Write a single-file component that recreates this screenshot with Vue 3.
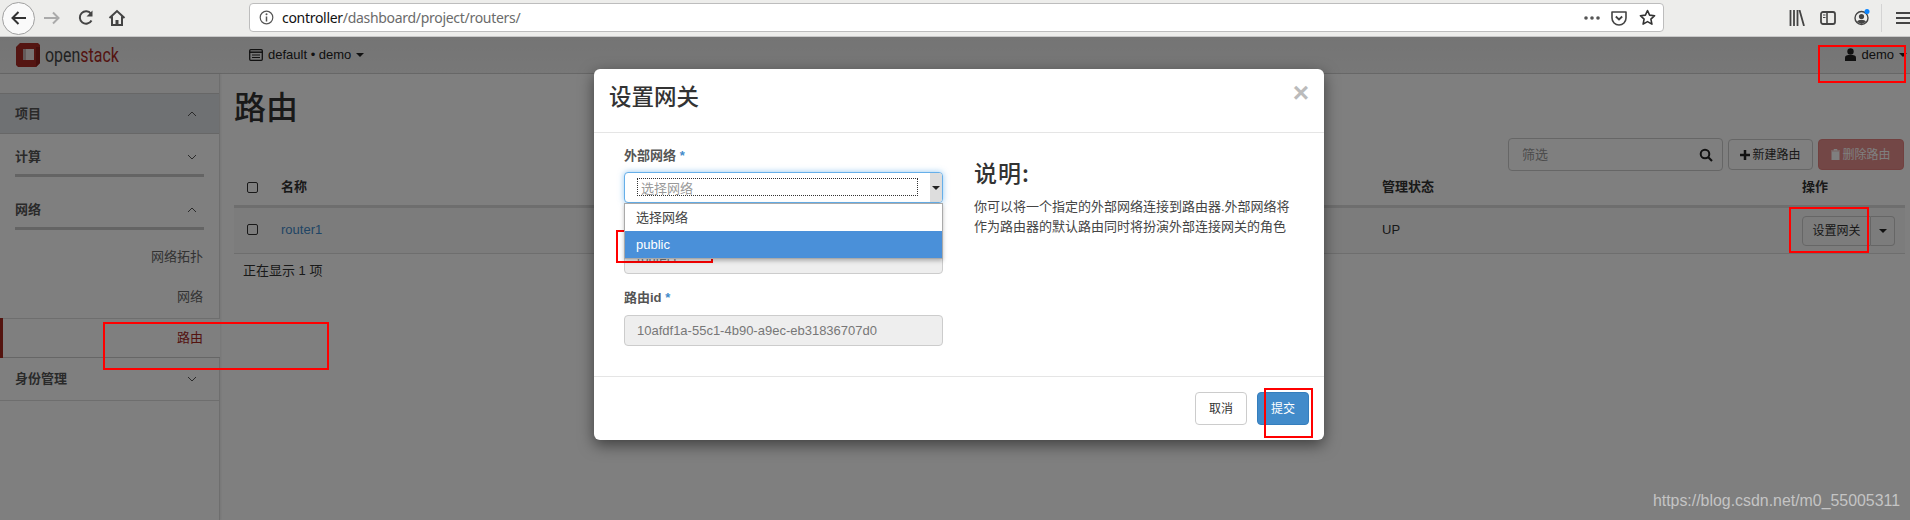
<template>
  <div class="page">
    <div class="browser">
      <div class="nav-btns">
        <span class="back">
          <svg width="20" height="20" viewBox="0 0 20 20"><path d="M17 10H4M9.500 4L3.500 10l6 6" fill="none" stroke="#333" stroke-width="2"/></svg>
        </span>
        <svg class="fwd" width="18" height="18" viewBox="0 0 18 18"><path d="M1 9h14M10 3.500L15.500 9 10 14.500" fill="none" stroke="#aaa" stroke-width="2"/></svg>
        <svg class="reload" width="18" height="18" viewBox="0 0 18 18"><path d="M14.500 11.500A6.200 6.200 0 1 1 14 4.800" fill="none" stroke="#444" stroke-width="2"/><path d="M15.500 1.500v6h-6z" fill="#444"/></svg>
        <svg class="home" width="18" height="18" viewBox="0 0 18 18"><path d="M1.500 9L9 2l7.500 7M4 7.500V16h10V7.500" fill="none" stroke="#444" stroke-width="2"/><path d="M7.500 16v-5h3v5z" fill="#444"/></svg>
      </div>
      <div class="url">
        <svg class="info" width="15" height="15" viewBox="0 0 15 15"><circle cx="7.500" cy="7.500" r="6.300" fill="none" stroke="#555" stroke-width="1.200"/><path d="M7.500 6.500v5" stroke="#555" stroke-width="1.500"/><circle cx="7.500" cy="4.300" r="1" fill="#555"/></svg>
        <span class="host">controller</span><span class="path">/dashboard/project/routers/</span>
        <span class="spacer"></span>
        <svg class="dots" width="16" height="4" viewBox="0 0 16 4"><circle cx="2" cy="2" r="1.800" fill="#555"/><circle cx="8" cy="2" r="1.800" fill="#555"/><circle cx="14" cy="2" r="1.800" fill="#555"/></svg>
        <svg class="pocket" width="16" height="16" viewBox="0 0 16 16"><path d="M1 2h14v6a7 7 0 0 1-14 0z" fill="none" stroke="#444" stroke-width="1.600" stroke-linejoin="round"/><path d="M4.800 6.500L8 9.500l3.200-3" fill="none" stroke="#444" stroke-width="1.800"/></svg>
        <svg class="star" width="17" height="17" viewBox="0 0 17 17"><path d="M8.500 1.500l2.100 4.600 5 .6-3.700 3.400 1 5-4.400-2.500-4.400 2.500 1-5L1.400 6.700l5-.6z" fill="none" stroke="#333" stroke-width="1.600" stroke-linejoin="round"/></svg>
      </div>
      <div class="tools">
        <svg width="16" height="16" viewBox="0 0 16 16"><path d="M1.500 0v16M5 0v16M8.500 0v16M10.500 0l4.500 16" stroke="#444" stroke-width="1.800" fill="none"/></svg>
        <svg width="16" height="14" viewBox="0 0 16 14"><rect x="1" y="1" width="14" height="12" rx="2" fill="none" stroke="#444" stroke-width="1.800"/><path d="M7 1.500v11" stroke="#444" stroke-width="1.600"/><path d="M3 4h2.500M3 6.500h2.500" stroke="#444" stroke-width="1.200"/></svg>
        <svg class="acct" width="16" height="18" viewBox="0 0 16 18"><circle cx="7.500" cy="10" r="6.500" fill="none" stroke="#444" stroke-width="1.400"/><circle cx="7.500" cy="8.500" r="2.600" fill="#444"/><path d="M3 14c1-3 8-3 9 0l-4.500 2z" fill="#444"/><circle cx="13" cy="3.500" r="2.500" fill="#0a84ff"/></svg>
        <span class="sep"></span>
        <svg width="14" height="14" viewBox="0 0 14 14"><path d="M0 2h14M0 7h14M0 12h14" stroke="#444" stroke-width="2"/></svg>
      </div>
    </div>

    <div class="navbar">
      <div class="brand">
        <svg width="24" height="24" viewBox="0 0 24 24"><path d="M4 0h18l2 2v18l-2 2-2 2H2l-2-2V4z" fill="#a82a24"/><path d="M20 4h4v16l-4 4z" fill="#8a1f1a"/><rect x="7" y="6" width="11" height="11" fill="#f0e8e8"/><path d="M7 6h3v11H7z" fill="#c9b5b5"/></svg>
        <span class="brand-text"><span>open</span><b>stack</b></span>
      </div>
      <div class="project">
        <svg width="14" height="12" viewBox="0 0 14 12"><rect x="0.700" y="0.700" width="12.600" height="10.600" rx="1" fill="none" stroke="#222" stroke-width="1.300"/><path d="M0 3.200h14" stroke="#222" stroke-width="1.500"/><path d="M3 6h8M3 8.500h8" stroke="#222" stroke-width="1.200"/></svg>
        <span>default • demo</span><i class="caret"></i>
      </div>
      <div class="user">
        <svg width="11" height="13" viewBox="0 0 11 13"><circle cx="5.500" cy="3.500" r="3.200" fill="#222"/><path d="M0 13V9.500C0 7.500 2 7 5.500 7S11 7.500 11 9.500V13z" fill="#222"/></svg>
        <span>demo</span><i class="caret"></i>
      </div>
    </div>

    <div class="content">
      <aside class="side">
        <div class="strip"></div>
        <div class="dash"><span>项目</span><svg class="chev" width="10" height="6" viewBox="0 0 10 6"><path d="M1 5l4-4 4 4" fill="none" stroke="#555" stroke-width="1"/></svg></div>
        <div class="panel"><span>计算</span><svg class="chev" width="10" height="6" viewBox="0 0 10 6"><path d="M1 1l4 4 4-4" fill="none" stroke="#555" stroke-width="1"/></svg></div>
        <div class="panel second"><span>网络</span><svg class="chev" width="10" height="6" viewBox="0 0 10 6"><path d="M1 5l4-4 4 4" fill="none" stroke="#555" stroke-width="1"/></svg></div>
        <div class="items">
          <div class="item">网络拓扑</div>
          <div class="item">网络</div>
          <div class="item active">路由</div>
        </div>
        <div class="identity"><span>身份管理</span><svg class="chev" width="10" height="6" viewBox="0 0 10 6"><path d="M1 1l4 4 4-4" fill="none" stroke="#555" stroke-width="1"/></svg></div>
      </aside>
      <main class="main">
        <h1>路由</h1>
        <div class="toolbar">
          <div class="filter"><span>筛选</span>
            <svg width="14" height="14" viewBox="0 0 14 14"><circle cx="6" cy="6" r="4.300" fill="none" stroke="#222" stroke-width="2"/><path d="M9 9l4 4" stroke="#222" stroke-width="2.200"/></svg>
          </div>
          <button class="btn new"><svg width="10" height="10" viewBox="0 0 10 10"><path d="M5 0v10M0 5h10" stroke="#222" stroke-width="2.500"/></svg>新建路由</button>
          <button class="btn del"><svg width="9" height="11" viewBox="0 0 9 11"><path d="M0 2h9M3 1.500V.5h3v1M1 3v8h7V3z" fill="#fff" stroke="#fff" stroke-width="1"/></svg>删除路由</button>
        </div>
        <div class="thead">
          <span><i class="check"></i></span><span>名称</span><span>管理状态</span><span>操作</span>
        </div>
        <div class="trow">
          <span><i class="check"></i></span><a class="link">router1</a><span>UP</span>
          <span class="group"><span class="act">设置网关</span><span class="more"><i class="caret"></i></span></span>
        </div>
        <div class="count">正在显示 1 项</div>
      </main>
    </div>

    <div class="backdrop"></div>

    <section class="modal">
      <header class="m-head"><h3>设置网关</h3><span class="close">×</span></header>
      <div class="m-body">
        <div class="form">
          <label>外部网络 <em>*</em></label>
          <div class="select">
            <span class="dotted">选择网络</span>
            <span class="arrow"><i class="caret"></i></span>
            <ul class="options">
              <li>选择网络</li>
              <li class="sel">public</li>
            </ul>
          </div>
          <label class="l2">路由名称</label>
          <div class="ro">router1</div>
          <label class="l3">路由id <em>*</em></label>
          <div class="ro ro-id">10afdf1a-55c1-4b90-a9ec-eb31836707d0</div>
        </div>
        <div class="help">
          <h3>说明:</h3>
          <p>你可以将一个指定的外部网络连接到路由器.外部网络将作为路由器的默认路由同时将扮演外部连接网关的角色</p>
        </div>
      </div>
      <footer class="m-foot">
        <button class="btn cancel">取消</button>
        <button class="btn submit">提交</button>
      </footer>
    </section>

    <div class="mark m1"></div>
    <div class="mark m2"></div>
    <div class="mark m3"></div>
    <div class="mark m4"></div>
    <div class="mark m5"></div>
    <div class="water">https://blog.csdn.net/m0_55005311</div>
  </div>
</template>

<script setup>
</script>

<style>
html, body { margin: 0; background: #fff; overflow: hidden; }
</style>

<style scoped>
.page { position: relative; width: 1910px; height: 520px; overflow: hidden; background: #fff; color: #333; font: 13px/20px "Liberation Sans", "Noto Sans CJK SC", sans-serif; }
.browser { display: flex; align-items: center; height: 36px; background: #ededeb; border-bottom: 1px solid #c9c9c9; box-sizing: content-box; }
.nav-btns { display: flex; align-items: center; width: 249px; flex: none; padding-left: 2px; box-sizing: border-box; }
.back { display: flex; align-items: center; justify-content: center; width: 33px; height: 33px; box-sizing: border-box; border: 1px solid #a0a0a0; border-radius: 50%; background: #fafafa; }
.fwd { margin-left: 8px; }
.reload { margin-left: 16px; }
.home { margin-left: 13px; }
.url { display: flex; align-items: center; width: 1415px; height: 29px; flex: none; margin-top: -1px; box-sizing: border-box; padding: 0 7px 0 9px; background: #fff; border: 1px solid #bdbdbd; border-radius: 4px; font: 14px "Noto Sans", sans-serif; letter-spacing: -.3px; }
.info { margin-right: 8px; }
.host { color: #111; }
.path { color: #6b6b6b; }
.spacer { flex: 1; }
.pocket { margin-left: 11px; }
.star { margin-left: 12px; }
.tools { display: flex; align-items: center; flex: 1; padding-left: 125px; }
.tools svg + svg { margin-left: 15px; }
.tools .acct { margin-left: 18px; margin-top: -3px; }
.sep { width: 1px; height: 28px; background: #d4d4d4; margin: 0 14px 0 11px; }

.navbar { display: flex; align-items: center; height: 36px; background: linear-gradient(#e9e9e9, #f0f0f0); border-bottom: 1px solid #cfcfcf; color: #222; }
.brand { display: flex; align-items: center; width: 249px; padding-left: 16px; box-sizing: border-box; }
.brand-text { display: inline-block; margin-left: 5px; font: 21px/24px "Roboto", sans-serif; color: #444; transform: scaleX(.76); transform-origin: left; white-space: nowrap; }
.brand-text b { font-weight: 400; color: #a8281f; }
.project { display: flex; align-items: center; gap: 5px; margin-top: -1px; }
.user { display: flex; align-items: center; gap: 5px; margin-left: auto; padding-right: 3px; margin-top: -1px; }
.caret { display: inline-block; width: 0; height: 0; border: 4px solid transparent; border-top-color: #222; border-bottom: 0; font-style: normal; }

.content { display: flex; height: 446px; background: #fff; }
.side { width: 220px; flex: none; box-sizing: border-box; border-right: 1px solid #dcdcdc; font-weight: 700; color: #555; box-shadow: 1px 0 2px rgba(0,0,0,.08); }
.strip { height: 19px; border-bottom: 1px solid #cfcfcf; background: #f6f6f6; }
.dash { display: flex; justify-content: space-between; align-items: center; height: 39px; padding: 0 22px 0 15px; border-bottom: 1px solid #cfcfcf; background: #dfe2e6; }
.panel { display: flex; justify-content: space-between; align-items: flex-start; margin: 0 15px 0 15px; padding: 13px 7px 7px 0; border-bottom: 3px solid #c8c8c8; height: 20px; }
.panel .chev { margin-top: 7px; }
.panel.second { margin-top: 10px; }
.items { margin-top: 8px; font-weight: 400; }
.item { height: 40px; line-height: 38px; text-align: right; padding-right: 16px; color: #666; }
.item.active { margin-right: -1px; background: #fff; color: #a8281f; line-height: 40px; border-left: 3px solid #a8281f; box-shadow: inset 0 1px 0 #ddd, inset 0 -1px 0 #ccc; padding-right: 17px; }
.identity { display: flex; justify-content: space-between; align-items: center; height: 42px; padding: 0 22px 0 15px; border-bottom: 1px solid #dcdcdc; }

.main { flex: 1; padding: 0 5px 0 14px; min-width: 0; }
h1 { margin: 0; height: 64px; line-height: 62px; font-size: 32px; font-weight: 500; color: #333; font-family: "Noto Sans CJK SC", sans-serif; }
.toolbar { display: flex; justify-content: flex-end; gap: 5px; height: 33px; align-items: flex-start; padding-right: 1px; }
.filter { display: flex; align-items: center; justify-content: space-between; width: 215px; height: 33px; box-sizing: border-box; padding: 0 9px 0 13px; border: 1px solid #ccc; border-radius: 4px; color: #999; background: #fff; }
.btn { display: inline-flex; align-items: center; justify-content: center; gap: 2px; box-sizing: border-box; height: 31px; margin-top: 1px; padding: 0; font: inherit; font-size: 12px; border: 1px solid #ccc; border-radius: 4px; background: #fff; color: #333; }
.new { width: 85px; }
.del { width: 86px; background: #d9534f; border-color: #d43f3a; opacity: .65; color: #fff; }
.thead, .trow { display: grid; grid-template-columns: 47px 1101px 420px 1fr; align-items: center; }
.thead { height: 32px; padding-bottom: 2px; font-weight: 700; border-bottom: 3px solid #ddd; }
.trow { height: 43px; padding-bottom: 2px; background: #f9f9f9; border-bottom: 1px solid #ddd; }
.thead > :first-child, .trow > :first-child { padding-left: 13px; display: flex; }
.check { display: block; width: 9px; height: 9px; border: 1px solid #333; border-radius: 2px; }
.link { color: #428bca; }
.group { display: flex; height: 30px; font-size: 12px; margin-top: 2px; }
.act { display: flex; align-items: center; justify-content: center; width: 69px; border: 1px solid #ccc; border-radius: 4px 0 0 4px; box-sizing: border-box; }
.more { display: flex; align-items: center; justify-content: center; width: 24px; border: 1px solid #ccc; border-left: 0; border-radius: 0 4px 4px 0; box-sizing: border-box; }
.count { padding: 7px 0 0 9px; }

.backdrop { position: absolute; left: 0; right: 0; top: 37px; bottom: 0; background: rgba(0,0,0,.5); }
.modal { position: absolute; left: 594px; top: 69px; width: 730px; height: 371px; display: flex; flex-direction: column; background: #fff; border-radius: 6px; box-shadow: 0 5px 15px rgba(0,0,0,.5); }
.m-head { display: flex; justify-content: space-between; align-items: flex-start; height: 63px; flex: none; padding: 0 15px 0 15px; border-bottom: 1px solid #e5e5e5; }
.m-head h3 { margin: 10px 0 0; line-height: 32px; font-size: 22.500px; font-weight: 500; color: #333; font-family: "Noto Sans CJK SC", sans-serif; }
.close { font: 700 28px/1 "Liberation Sans", sans-serif; color: #bbb; margin-top: 10px; }
.m-body { flex: 1; display: flex; padding: 14px 0 0 30px; }
.form { width: 319px; flex: none; position: relative; }
label { display: block; height: 18px; line-height: 18px; font-weight: 700; color: #555; }
label em { color: #428bca; font-style: normal; }
.select { position: relative; height: 31px; margin-top: 7px; box-sizing: border-box; border: 1px solid #66afe9; border-radius: 4px; box-shadow: 0 0 6px rgba(102,175,233,.7); display: flex; background: #fff; }
.dotted { margin: 5px 0 0 12px; width: 281px; height: 18px; line-height: 19px; box-sizing: border-box; border: 1px dotted #333; color: #999; padding-left: 3px; overflow: hidden; }
.arrow { margin-left: auto; width: 12px; background: #ddd; display: flex; align-items: center; justify-content: center; border-radius: 0 3px 3px 0; }
.options { position: absolute; left: -1px; right: -1px; top: 30px; margin: 0; padding: 0; list-style: none; background: #fff; border: 1px solid #aaa; box-shadow: 0 2px 4px rgba(0,0,0,.25); z-index: 2; box-sizing: border-box; }
.options li { height: 27px; line-height: 27px; padding-left: 11px; color: #444; }
.options .sel { background: #4a90d9; color: #fff; }
.l2 { margin-top: 14px; }
.ro { height: 30px; margin-top: 9px; box-sizing: border-box; padding-left: 12px; line-height: 28px; background: #eee; border: 1px solid #ccc; border-radius: 4px; color: #777; }
.ro-id { height: 31px; margin-top: 8px; line-height: 29px; }
.l3 { margin-top: 15px; }
.help { width: 320px; margin-left: 31px; padding-top: 10px; }
.help h3 { margin: 0 0 10px; font-size: 23px; line-height: 30px; font-weight: 500; color: #333; font-family: "Noto Sans CJK SC", sans-serif; letter-spacing: 1px; }
.help p { margin: 0; color: #444; }
.m-foot { display: flex; justify-content: flex-end; gap: 10px; height: 64px; flex: none; padding: 15px 15px 0 0; box-sizing: border-box; border-top: 1px solid #e5e5e5; }
.cancel, .submit { width: 52px; height: 33px; margin: 0; }
.submit { background: #428bca; border-color: #357ebd; color: #fff; }

.mark { position: absolute; border: 2px solid #f00; box-sizing: border-box; }
.m1 { left: 1818px; top: 45px; width: 88px; height: 38px; }
.m2 { left: 103px; top: 322px; width: 226px; height: 48px; }
.m3 { left: 616px; top: 230px; width: 97px; height: 33px; }
.m4 { left: 1789px; top: 207px; width: 80px; height: 46px; }
.m5 { left: 1264px; top: 388px; width: 49px; height: 50px; }
.water { position: absolute; right: 10px; top: 491px; font: 15.900px/20px "Liberation Sans", sans-serif; color: #c4c4c4; }
</style>
